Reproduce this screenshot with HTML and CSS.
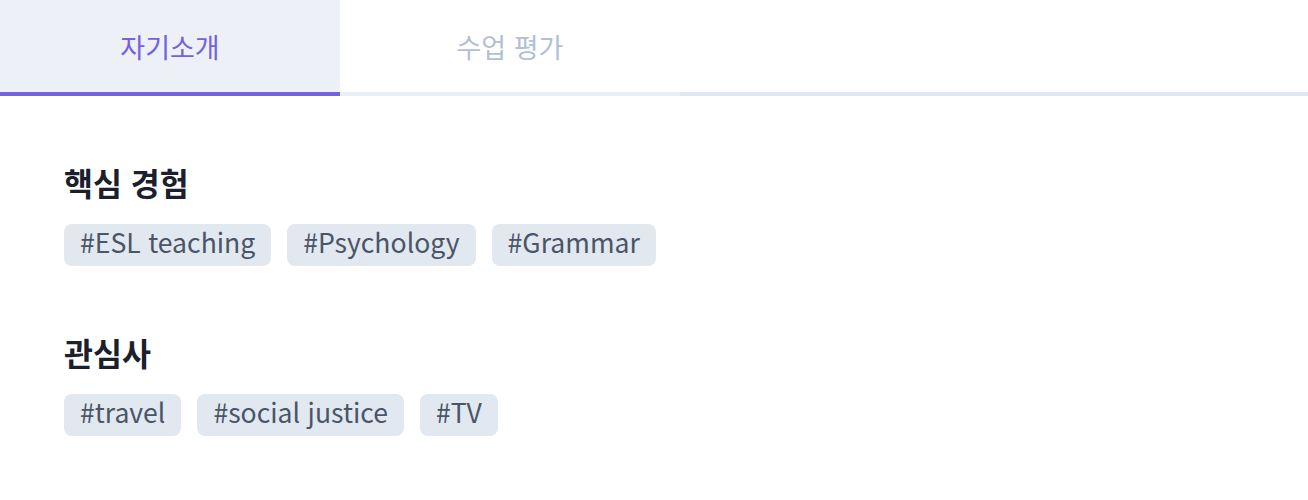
FILE: index.html
```html
<!DOCTYPE html>
<html lang="ko">
<head>
<meta charset="utf-8">
<link rel="stylesheet" href="styles.css">
</head>
<body>
<div class="tabs">
  <div class="tab active">자기소개</div>
  <div class="tab">수업 평가</div>
  <div class="tab-rest"></div>
</div>
<div class="content">
  <section class="section">
    <h2 class="title">핵심 경험</h2>
    <div class="tags">
      <span class="tag">#ESL teaching</span>
      <span class="tag">#Psychology</span>
      <span class="tag">#Grammar</span>
    </div>
  </section>
  <section class="section">
    <h2 class="title">관심사</h2>
    <div class="tags">
      <span class="tag">#travel</span>
      <span class="tag">#social justice</span>
      <span class="tag">#TV</span>
    </div>
  </section>
</div>
</body>
</html>
```
FILE: styles.css
```css
html, body {
  margin: 0;
  padding: 0;
  background: #ffffff;
  font-family: "Noto Sans CJK KR", "Noto Sans", sans-serif;
}
.tabs {
  display: flex;
  height: 96px;
}
.tab {
  width: 340px;
  box-sizing: border-box;
  display: flex;
  align-items: center;
  justify-content: center;
  font-size: 27px;
  font-weight: 400;
  color: #b3bfd4;
  border-bottom: 4px solid #eaeef5;
}
.tab.active {
  background: #edf0f6;
  color: #7561dc;
  border-bottom-color: #7561dc;
}
.tab-rest {
  flex: 1;
  border-bottom: 4px solid #e2e8f0;
}
.content {
  padding: 66px 64px 0;
}
.section {
  margin-bottom: 66px;
}
.title {
  margin: 0 0 22px;
  font-size: 31.5px;
  line-height: 40px;
  font-weight: 700;
  color: #1a202c;
}
.tags {
  display: flex;
  gap: 16px;
}
.tag {
  background: #e2e8f0;
  color: #4a5568;
  font-size: 26.6px;
  line-height: 34px;
  padding: 1px 16px 7px;
  border-radius: 8px;
}
```
